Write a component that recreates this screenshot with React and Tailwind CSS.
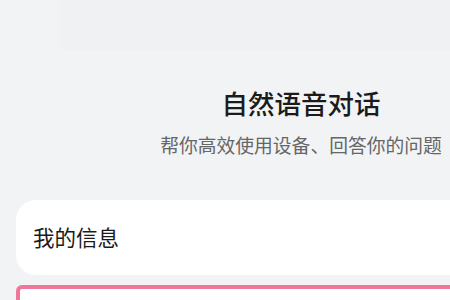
import React from 'react';

// 语音助手设置页（截取片段）
export default function App() {
  return (
    <div
      className="relative w-[450px] h-[300px] overflow-hidden bg-[#f2f3f5]"
      style={{ fontFamily: '"Noto Sans CJK SC", "Noto Sans", sans-serif' }}
    >
      {/* 顶部淡色区域 */}
      <div className="ml-[60px] h-[50px] bg-[#f0f1f3]" />

      <div className="w-[602px] flex flex-col items-center">
        <h1 className="mt-[36px] text-[26.5px] leading-[34px] font-medium text-[#1b1b1b]">
          自然语音对话
        </h1>
        <p className="mt-[12px] text-[18.8px] leading-[26px] text-[#666666]">
          帮你高效使用设备、回答你的问题
        </p>
      </div>

      {/* 我的信息 卡片 */}
      <div className="ml-[16px] mt-[42px] w-[600px] h-[75px] rounded-[20px] bg-white flex items-center pl-[17px]">
        <span className="text-[21.5px] text-[#1b1b1b]">我的信息</span>
      </div>

      {/* 选中框 */}
      <div className="ml-[16px] mt-[10px] w-[600px] h-[60px] rounded-tl-[6px] border-[4px] border-[#ee7799] bg-white" />
    </div>
  );
}
